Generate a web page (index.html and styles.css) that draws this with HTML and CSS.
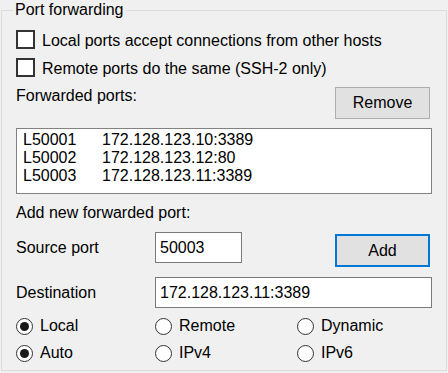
FILE: index.html
```html
<html>
<head>
    <meta charset="utf-8">
    <link rel="stylesheet" href="styles.css">
</head>
<body>

    <fieldset class="group">
        <legend>Port forwarding</legend>

        <!-- options -->
        <label class="check first"><span class="box"></span><span>Local ports accept connections from other hosts</span></label>
        <label class="check"><span class="box"></span><span>Remote ports do the same (SSH-2 only)</span></label>

        <!-- list of forwarded ports -->
        <div class="head">
            <span class="text">Forwarded ports:</span>
            <button class="btn">Remove</button>
        </div>
        <div class="list">
            <div class="item"><span class="port">L50001</span><span>172.128.123.10:3389</span></div>
            <div class="item"><span class="port">L50002</span><span>172.128.123.12:80</span></div>
            <div class="item"><span class="port">L50003</span><span>172.128.123.11:3389</span></div>
        </div>

        <!-- new port -->
        <div class="caption">Add new forwarded port:</div>
        <div class="field">
            <span class="lbl">Source port</span>
            <div class="input small">50003</div>
            <button class="btn add">Add</button>
        </div>
        <div class="field dest">
            <span class="lbl">Destination</span>
            <div class="input wide">172.128.123.11:3389</div>
        </div>

        <div class="radios">
            <label class="radio on"><span class="dot"></span>Local</label>
            <label class="radio"><span class="dot"></span>Remote</label>
            <label class="radio"><span class="dot"></span>Dynamic</label>
            <label class="radio on"><span class="dot"></span>Auto</label>
            <label class="radio"><span class="dot"></span>IPv4</label>
            <label class="radio"><span class="dot"></span>IPv6</label>
        </div>
    </fieldset>

</body>
</html>
```

FILE: styles.css
```css
body {
    margin: 0;
    background-color: #f0f0f0;
    font-family: "Liberation Sans", Arial, sans-serif;
    font-size: 16px;
    color: #000;
}

.group {
    margin: 0 1px 2px 1px;
    padding: 0 14px 8px 14px;
    border: 1px solid #dcdcdc;
    min-width: 0;
}

.group legend {
    margin-left: -3px;
    padding: 0 2px;
    line-height: 20px;
}

/* checkboxes */
.check {
    display: flex;
    align-items: center;
    height: 19px;
    margin-top: 9px;
    line-height: 19px;
}
.check.first {
    margin-top: 10px;
}
.check span:last-child {
    padding-top: 2px;
}
.box {
    width: 15px;
    height: 15px;
    border: 2px solid #333;
    background-color: #fff;
    margin-right: 7px;
}

.head {
    display: flex;
    justify-content: space-between;
    align-items: flex-start;
    margin-top: 10px;
}
.text, .caption, .lbl {
    line-height: 18px;
}

.btn {
    font-family: "Liberation Sans", Arial, sans-serif;
    font-size: 16px;
    color: #000;
    width: 95px;
    height: 32px;
    margin-right: 2px;
    padding: 0;
    background-color: #e1e1e1;
    border: 1px solid #adadad;
    outline: none;
}
.btn.add {
    height: 33px;
    margin-top: 2px;
    border: 2px solid #0078d7;
}

/* listbox */
.list {
    margin-top: 9px;
    height: 60px;
    padding: 2px 0 2px 6px;
    border: 1px solid #828282;
    background-color: #fff;
}
.item {
    display: flex;
    line-height: 18px;
}
.port {
    width: 79px;
}

.caption {
    margin-top: 10px;
}

/* fields */
.field {
    display: flex;
    align-items: flex-start;
    margin-top: 10px;
}
.lbl {
    width: 139px;
    margin-top: 7px;
}
.input {
    height: 29px;
    line-height: 29px;
    padding: 0 0 0 4px;
    border: 1px solid #7a7a7a;
    background-color: #fff;
}
.input.small {
    width: 81px;
    margin-right: 93px;
}
.input.wide {
    width: 271px;
}

/* radio buttons */
.radios {
    display: grid;
    grid-template-columns: 139px 142px 1fr;
    row-gap: 9px;
    margin-top: 9px;
}
.radio {
    display: flex;
    align-items: center;
    height: 18px;
}
.dot {
    position: relative;
    width: 15px;
    height: 15px;
    margin-right: 7px;
    border: 1.5px solid #333;
    border-radius: 50%;
    background-color: #fff;
}
.radio.on .dot:after {
    content: "";
    position: absolute;
    left: 3px;
    top: 3px;
    width: 9px;
    height: 9px;
    border-radius: 50%;
    background-color: #1a1a1a;
}
```
